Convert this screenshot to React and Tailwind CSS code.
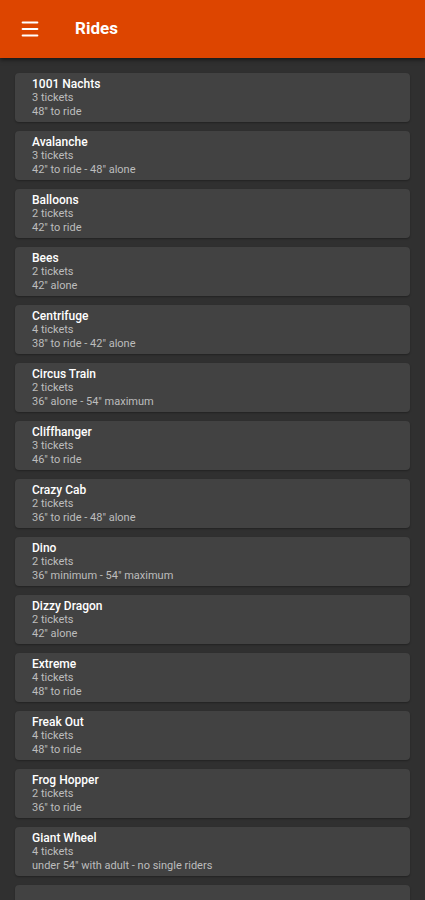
import { Menu } from 'lucide-react'

const RIDES = [
  { name: '1001 Nachts', tickets: '3 tickets', note: '48" to ride' },
  { name: 'Avalanche', tickets: '3 tickets', note: '42" to ride - 48" alone' },
  { name: 'Balloons', tickets: '2 tickets', note: '42" to ride' },
  { name: 'Bees', tickets: '2 tickets', note: '42" alone' },
  { name: 'Centrifuge', tickets: '4 tickets', note: '38" to ride - 42" alone' },
  { name: 'Circus Train', tickets: '2 tickets', note: '36" alone - 54" maximum' },
  { name: 'Cliffhanger', tickets: '3 tickets', note: '46" to ride' },
  { name: 'Crazy Cab', tickets: '2 tickets', note: '36" to ride - 48" alone' },
  { name: 'Dino', tickets: '2 tickets', note: '36" minimum - 54" maximum' },
  { name: 'Dizzy Dragon', tickets: '2 tickets', note: '42" alone' },
  { name: 'Extreme', tickets: '4 tickets', note: '48" to ride' },
  { name: 'Freak Out', tickets: '4 tickets', note: '48" to ride' },
  { name: 'Frog Hopper', tickets: '2 tickets', note: '36" to ride' },
  { name: 'Giant Wheel', tickets: '4 tickets', note: 'under 54" with adult - no single riders' },
]

export default function App() {
  return (
    <div className="h-[900px] overflow-hidden bg-[#303030] font-['Roboto',sans-serif]">
      <header className="h-[58px] bg-[#dd4500] flex items-center shadow-[0_2px_4px_rgba(0,0,0,0.5)] relative z-10">
        <div className="w-[75px] pl-[19px]">
          <Menu size={22} color="white" strokeWidth={2.25} />
        </div>
        <h1 className="text-white text-[17px] font-bold">Rides</h1>
      </header>

      <div className="flex flex-col gap-[9px] px-[15px] pt-[15px]">
        {RIDES.map(r => (
          <div key={r.name} className="rounded-[4px] bg-[#424242] pl-[17px] pt-[4px] pb-[3px] shadow-[0_1px_2px_rgba(0,0,0,0.3)]">
            <div className="text-white text-[12px] font-medium leading-[14px]">{r.name}</div>
            <div className="text-[#bdbdbd] text-[11px] leading-[14px]">{r.tickets}</div>
            <div className="text-[#bdbdbd] text-[11px] leading-[14px]">{r.note}</div>
          </div>
        ))}
        {/* next card, only its top edge shows */}
        <div className="h-[49px] rounded-[4px] bg-[#424242] shadow-[0_1px_2px_rgba(0,0,0,0.3)]" />
      </div>
    </div>
  )
}
